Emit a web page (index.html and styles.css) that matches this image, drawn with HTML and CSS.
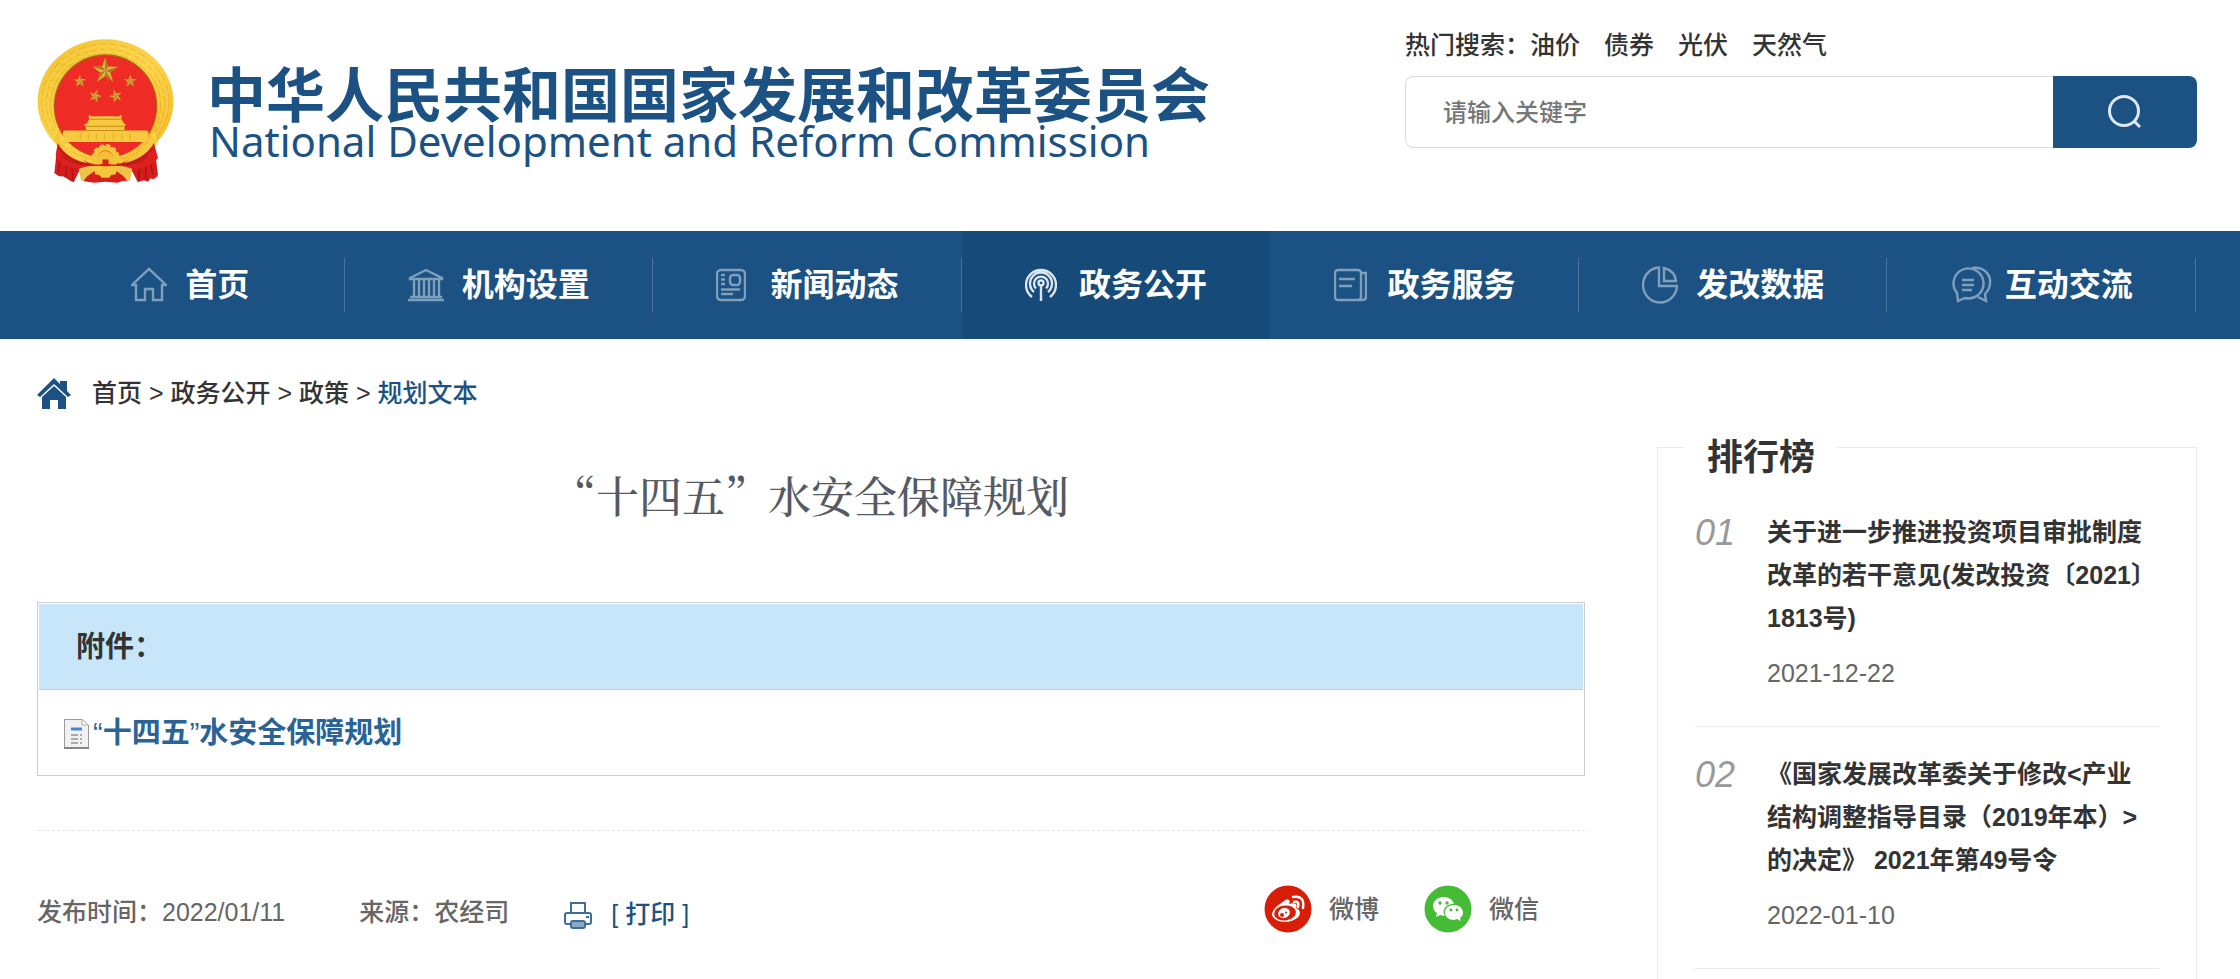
FILE: index.html
```html
<!DOCTYPE html>
<html lang="zh-CN">
<head>
<meta charset="utf-8">
<meta name="viewport" content="width=device-width, initial-scale=1">
<title>“十四五”水安全保障规划</title>
<link rel="stylesheet" href="styles.css">
</head>
<body>
<header class="header wrap">
  <a class="brand" href="#">
    <svg class="emblem" viewBox="20 20 410 437" aria-hidden="true">
      <defs>
        <linearGradient id="gold" x1="0" y1="0" x2="1" y2="1">
          <stop offset="0" stop-color="#f2c12e"/><stop offset=".5" stop-color="#fbd44a"/><stop offset="1" stop-color="#f4b425"/>
        </linearGradient>
        <path id="star" d="M0-40 9.500-13 38-12 15 5 24 33 0 16-24 33-15 5-38-12-9.500-13Z"/>
        <path id="facet" d="M0-40 0 0 9.500-13ZM38-12 0 0 15 5ZM24 33 0 0 0 16ZM-24 33 0 0-15 5ZM-38-12 0 0-9.500-13Z"/>
      </defs>
      <ellipse cx="225" cy="210" rx="203" ry="186" fill="url(#gold)"/>
      <g fill="none" stroke="#dd9f1d" stroke-width="3" opacity=".4">
        <ellipse cx="225" cy="212" rx="190" ry="174" stroke-dasharray="22 9"/>
        <ellipse cx="225" cy="215" rx="177" ry="161" stroke-dasharray="14 12"/>
        <ellipse cx="225" cy="220" rx="165" ry="153" stroke-dasharray="26 7"/>
      </g>
      <g fill="none" stroke="#ffe27a" stroke-width="3" opacity=".5">
        <ellipse cx="225" cy="214" rx="184" ry="168" stroke-dasharray="16 14"/>
        <ellipse cx="225" cy="218" rx="171" ry="157" stroke-dasharray="12 18"/>
      </g>
      <path d="M82 330Q92 368 150 392L225 402 300 392Q358 368 370 330L382 430Q372 446 360 440L352 450Q338 442 322 452L300 410H150L130 452Q118 448 108 440L98 434Q84 436 72 424Z" fill="#d31c1b"/>
      <g fill="none" stroke="#99100f" stroke-width="4" opacity=".7">
        <path d="M92 362 84 424M106 376 108 436M122 388 128 446M356 362 366 430M344 376 346 444M328 388 324 446"/>
      </g>
      <circle cx="225" cy="224" r="155" fill="#a56c12"/>
      <circle cx="225" cy="225" r="152" fill="#ee2b24"/>
      <use href="#star" transform="translate(224 118)" fill="#e0b33c"/><use href="#facet" transform="translate(224 118)" fill="#ad7a22"/>
      <g fill="#e0b03a">
        <use href="#star" transform="translate(148 149) scale(.5)"/><use href="#star" transform="translate(299 149) scale(.5)"/>
        <use href="#star" transform="translate(194 194) rotate(18) scale(.5)"/><use href="#star" transform="translate(256 194) rotate(-18) scale(.5)"/>
      </g>
      <g fill="#b8832a">
        <use href="#facet" transform="translate(148 149) scale(.5)"/><use href="#facet" transform="translate(299 149) scale(.5)"/>
        <use href="#facet" transform="translate(194 194) rotate(18) scale(.5)"/><use href="#facet" transform="translate(256 194) rotate(-18) scale(.5)"/>
      </g>
      <path d="M174 253 180 250V254H268V250L274 253 272 262 280 275 286 279 282 285V297H350L354 302 350 331H100L97 302 102 297H166V285L160 280 170 275 176 262Z" fill="#f6c93e"/>
      <path d="M177 263H271M164 284H284M166 297H284" stroke="#c88b1b" stroke-width="3" fill="none"/>
      <path d="M150 306V327M174 306V327M198 306V327M222 306V327M248 306V327M274 306V327M298 306V327" stroke="#e8b535" stroke-width="4"/>
      <path d="M80 302Q112 378 178 386L270 386Q342 374 370 300L382 330Q350 398 270 404L180 404Q106 398 72 326Z" fill="url(#gold)"/>
      <path d="M82 334Q110 386 182 396L225 382 268 396Q340 386 370 334L382 380Q350 418 302 410L262 414Q240 398 225 396 210 398 188 414L148 410Q96 412 76 372Z" fill="#dc211e"/>
      <path d="M96 374Q140 408 206 398M354 374Q310 408 244 398M86 350Q120 394 176 398M366 350Q330 394 274 398" stroke="#a11212" stroke-width="4" fill="none" opacity=".6"/>
      <circle cx="225" cy="380" r="31" fill="none" stroke="#f4c63b" stroke-width="15"/>
      <circle cx="225" cy="380" r="38" fill="none" stroke="#f4c63b" stroke-width="9" stroke-dasharray="12 8"/>
      <circle cx="225" cy="382" r="24" fill="#f3c03a"/>
      <path d="M145 412Q180 398 206 404L180 432 152 448ZM305 412Q270 398 244 404L270 432 298 448Z" fill="#efc248"/>
      <path d="M158 448Q188 410 225 408 262 410 292 448 276 446 262 453L225 450 190 453Z" fill="#d81f1c"/>
      <path d="M190 408 225 396 260 408 256 428 242 430 236 438H214L206 430 194 428Z" fill="#f4c63b"/>
      <path d="M154 382Q190 406 216 396L216 384H234L234 396Q262 406 296 382L270 402 225 404 180 402Z" fill="#d91e1b"/>
    </svg>
    <span class="brand-text">
      <span class="brand-cn">中华人民共和国国家发展和改革委员会</span>
      <span class="brand-en" lang="en">National Development and Reform Commission</span>
    </span>
  </a>
  <div class="search">
    <div class="hot"><span>热门搜索：</span><a href="#">油价</a><a href="#">债券</a><a href="#">光伏</a><a href="#">天然气</a></div>
    <form class="search-form">
      <input class="search-input" type="text" placeholder="请输入关键字" aria-label="请输入关键字">
      <button class="search-btn" type="button" aria-label="搜索">
        <svg width="36" height="36" viewBox="0 0 36 36" fill="none" stroke="#dfe8f0" stroke-width="3"><circle cx="17" cy="17" r="14.500"/><path d="M27 27 33 33"/></svg>
      </button>
    </form>
  </div>
</header>

<nav class="nav">
  <div class="nav-list">
    <a class="nav-item" href="#"><span class="nav-icon"><svg width="36" height="36" viewBox="0 0 36 36"><path d="M5 18H1L18 2 35 18H31V33H22V22H14V33H5Z"/></svg></span>首页</a>
    <a class="nav-item" href="#"><span class="nav-icon"><svg width="36" height="36" viewBox="0 0 36 36"><path d="M2 11 18 3 34 11V12H2ZM0 33H36M2 30H34M6 13V30M11 13V30M16 13V30M21 13V30M26 13V30M31 13V30"/></svg></span>机构设置</a>
    <a class="nav-item" href="#"><span class="nav-icon"><svg width="30" height="36" viewBox="0 0 30 36"><rect x="1" y="3" width="28" height="30" rx="4"/><rect x="14" y="8" width="10" height="10" rx="3"/><path d="M5 8H9M5 12.500H9M5 17H9M5 22.500H24M5 27H17"/></svg></span>新闻动态</a>
    <a class="nav-item active" href="#"><span class="nav-icon"><svg width="32" height="36" viewBox="0 0 32 36"><path d="M7 30A15 15 0 1 1 25 30M9 25A11 11 0 1 1 23 25M11 21.500A7 7 0 1 1 21 21.500M16 17V34"/><circle cx="16" cy="16" r="2.500"/></svg></span>政务公开</a>
    <a class="nav-item" href="#"><span class="nav-icon"><svg width="33" height="36" viewBox="0 0 33 36"><rect x="1" y="3" width="26" height="30" rx="3"/><path d="M5 12H21M5 19H18M27 6H32V30Q32 33 28 33H24"/></svg></span>政务服务</a>
    <a class="nav-item" href="#"><span class="nav-icon"><svg width="36" height="40" viewBox="0 0 36 40"><path d="M17 2.500A17 17.500 0 1 0 35 21H17ZM22 3V16H34Q33 6 22 3Z"/></svg></span>发改数据</a>
    <a class="nav-item" href="#"><span class="nav-icon"><svg width="41" height="38" viewBox="0 0 41 38"><path d="M7 35 6 27A15 15 0 1 1 14 32ZM21 2C34 0 40 10 39 17 39 23 36 26 34 28L35 35 27 31M11 14H23M11 19H23M11 24H21"/></svg></span>互动交流</a>
  </div>
</nav>

<div class="crumbs wrap">
  <svg class="crumb-home" width="34" height="32" viewBox="0 0 34 32" fill="#1b5283"><path d="M17 0 23 6V3H30V13L34 17 31 19 17 6 3 19 0 17Z"/><path d="M17 8 29 19V31H21V22H13V31H5V19Z"/></svg>
  <p class="crumb-text"><a href="#">首页</a> &gt; <a href="#">政务公开</a> &gt; <a href="#">政策</a> &gt; <a class="here" href="#">规划文本</a></p>
</div>

<main class="main wrap">
  <article class="article">
    <h1 class="title">“十四五”水安全保障规划</h1>
    <section class="files">
      <h2 class="files-head">附件：</h2>
      <a class="file" href="#"><svg width="25" height="30" viewBox="0 0 25 30"><path d="M.5.5H18L24.500 6V29.500H.5Z" fill="#f1f1f3" stroke="#9a9a9a"/><path d="M0 29H25" stroke="#858585" stroke-width="2"/><path d="M18 1V6H24" fill="#fff" stroke="#aaa"/><path d="M7 10H18" stroke="#3f86d8" stroke-width="3"/><path d="M7 16H14M16 16H18M7 20H14M16 20H18M7 24H14M16 24H18" stroke="#aaa" stroke-width="2"/></svg><span>“<b>十四五</b>”<b>水安全保障规划</b></span></a>
    </section>
    <footer class="meta">
      <div class="meta-info">
        <span class="date">发布时间：2022/01/11</span>
        <span class="source">来源：农经司</span>
        <button class="print" type="button"><svg width="28" height="28" viewBox="0 0 28 28" fill="none" stroke="#3c6d9b" stroke-width="2"><path d="M7 12V2H21V12"/><path d="M6 23H3Q1 23 1 21V14Q1 12 3 12H25Q27 12 27 14V21Q27 23 25 23H22"/><rect x="7" y="20" width="14" height="7" rx="2" fill="#8aa9c5"/><path d="M22 16H25"/></svg><span>[ <b>打印</b> ]</span></button>
      </div>
      <div class="share">
        <a href="#"><svg width="48" height="48" viewBox="0 0 48 48"><circle cx="24" cy="24" r="23.500" fill="#d81e06"/><path d="M20 16C24 13 27 15 25 19 31 17 34 19 32 23 37 25 37 30 33 33 27 38 16 38 11 34 5 30 8 24 20 16Z" fill="#fff"/><ellipse cx="21" cy="28" rx="11" ry="7.500" transform="rotate(-7 21 28)" fill="#d81e06"/><ellipse cx="20" cy="28" rx="6" ry="5" transform="rotate(-20 20 28)" fill="#fff"/><circle cx="18" cy="30" r="2" fill="#d81e06"/><circle cx="22" cy="27.500" r="1" fill="#d81e06"/><path d="M29 12Q41 10 39 23M30 17Q36 16 34 22" fill="none" stroke="#fff" stroke-width="2.500" stroke-linecap="round"/></svg>微博</a>
        <a href="#"><svg width="48" height="48" viewBox="0 0 48 48"><circle cx="24" cy="24" r="23.500" fill="#46bb36"/><path d="M20 12C14 12 9 16 9 21 9 24 11 27 13 28L12 32 16 30 21 31A9 8 0 0 1 30 19C29 15 25 12 20 12Z" fill="#fff"/><path d="M30 20C25 20 21 23 21 27.500S25 35 30 35L33 34 37 36 36 33C38 31 39 30 39 27.500 39 23 35 20 30 20Z" fill="#fff"/><g fill="#46bb36"><circle cx="16" cy="18" r="1.700"/><circle cx="23" cy="18" r="1.700"/><circle cx="27" cy="25" r="1.400"/><circle cx="33" cy="25" r="1.400"/></g></svg>微信</a>
      </div>
    </footer>
  </article>

  <aside class="rank">
    <h2 class="rank-title">排行榜</h2>
    <ol class="rank-list">
      <li class="rank-item"><em>01</em><div><a href="#">关于进一步推进投资项目审批制度改革的若干意见(发改投资〔2021〕1813号)</a><time>2021-12-22</time></div></li>
      <li class="rank-item"><em>02</em><div><a href="#">《国家发展改革委关于修改&lt;产业结构调整指导目录（2019年本）&gt;的决定》 2021年第49号令</a><time>2022-01-10</time></div></li>
    </ol>
  </aside>
</main>
</body>
</html>
```
FILE: styles.css
```css
* { box-sizing: border-box; }
body {
  margin: 0;
  min-height: 100vh;
  display: flex;
  flex-direction: column;
  background: #fff;
  color: #333;
  font: 500 25px/43px "Liberation Sans", "Noto Sans CJK SC", sans-serif;
}
a { color: inherit; text-decoration: none; }
h1, h2, p, ol { margin: 0; padding: 0; }
svg { flex: none; display: block; }
.wrap { padding-left: 37px; padding-right: 43px; }

/* header */
.header { display: flex; justify-content: space-between; align-items: flex-start; padding-bottom: 46px; }
.brand { display: flex; padding-top: 37px; color: #1b5283; }
.emblem { width: 137px; height: 148px; }
.brand-text { display: flex; flex-direction: column; padding: 21px 0 0 33px; white-space: nowrap; }
.brand-cn { font: 700 59px/68px "Noto Sans CJK SC", sans-serif; }
.brand-en { font: 400 42px/48px "Noto Sans", sans-serif; padding-left: 2px; margin-top: -9px; }
.search { flex: 0 1 792px; padding-top: 24px; }
.hot { display: flex; margin-bottom: 9px; }
.hot a { margin-right: 24px; }
.search-form { display: flex; height: 72px; }
.search-input {
  flex: 1; min-width: 0; padding: 0 37px; border: 1px solid #ddd; border-right: 0;
  border-radius: 8px 0 0 8px; font: inherit; font-size: 24px; background: #fff;
}
.search-input::placeholder { color: #757575; }
.search-btn {
  width: 144px; padding: 0; border: 0; border-radius: 0 8px 8px 0; background: #1b5283;
  display: flex; align-items: center; justify-content: center;
}

/* navigation */
.nav { background: #1b5283; }
.nav-list { display: flex; padding: 0 44px 0 36px; }
.nav-item {
  flex: 1; height: 108px; display: flex; align-items: center; justify-content: center;
  color: #fff; font-size: 32px; font-weight: 700; white-space: nowrap;
  background: linear-gradient(#49759c, #49759c) right center / 1px 54px no-repeat;
}
.nav-item.active { background: #164a78; }
.nav-icon { width: 54px; }
.nav-icon svg { fill: none; stroke: #7f9fbb; stroke-width: 2.4; }
.active .nav-icon svg { stroke: #dbe5ee; }

/* breadcrumb */
.crumbs { display: flex; align-items: center; gap: 21px; padding-top: 33px; }
.crumb-text .here { color: #1b5283; }

/* content */
.main { flex: 1; display: grid; grid-template-columns: minmax(0, 1fr) 540px; gap: 72px; padding-top: 32px; }
.title {
  text-align: center; color: #555a64; font: 500 43px/60px "Noto Serif CJK SC", "Noto Sans CJK SC", serif;
  padding-top: 18px;
}
.files { margin-top: 77px; border: 1px solid #ccc; font-size: 29px; }
.files-head {
  margin: 1px 1px 0; padding: 22px 37px 20px; border-bottom: 1px solid #ccc;
  background: #c7e6fa; font-size: inherit; font-weight: 700;
}
.file { display: flex; align-items: center; gap: 4px; padding: 22px 26px 20px; color: #2a6496; }
.meta {
  display: flex; align-items: flex-start; justify-content: space-between;
  margin-top: 54px; padding-top: 54px; border-top: 1px dashed #e6e6e6; color: #666;
}
.meta-info { display: flex; align-items: center; padding-top: 4px; }
.source { margin-left: 74px; }
.print {
  display: flex; align-items: center; gap: 19px; margin-left: 55px; padding: 4px 0 0;
  border: 0; background: none; color: #1b5283; font: inherit;
}
.print b { font-weight: 500; }
.share { display: flex; gap: 45px; padding-right: 46px; }
.share a { display: flex; align-items: center; gap: 17px; }

/* ranking */
.rank { border: 1px solid #e8eaec; border-bottom: 0; padding: 0 37px; }
.rank-title {
  width: fit-content; margin: -12px 0 0 -11px; padding: 0 22px 0 23px; background: #fff;
  font-size: 36px; font-weight: 700;
}
.rank-list { list-style: none; padding-top: 6px; }
.rank-item { display: flex; padding: 26px 12px 31px 0; border-bottom: 1px solid #e8eaec; }
.rank-item em { flex: none; width: 72px; color: #999; font-size: 36px; font-weight: 400; }
.rank-item a { display: block; font-weight: 600; }
.rank-item time { display: block; margin-top: 12px; color: #666; }
```
